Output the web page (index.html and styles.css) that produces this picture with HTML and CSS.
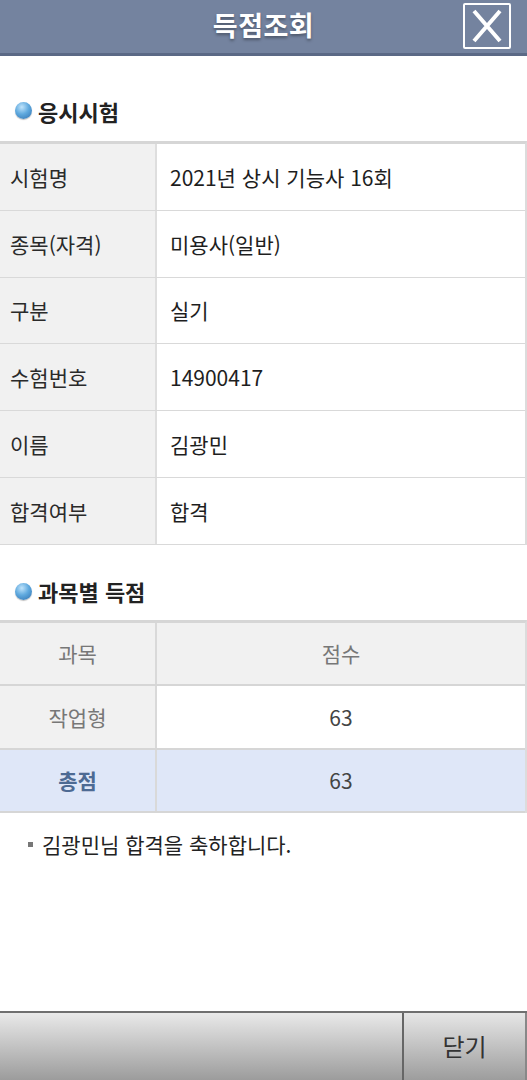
FILE: index.html
```html
<!DOCTYPE html>
<html lang="ko">
<head>
<meta charset="utf-8">
<title>득점조회</title>
<link rel="stylesheet" href="styles.css">
</head>
<body>
<div class="page">
  <header class="topbar">
    <h1 class="title">득점조회</h1>
    <button class="close-x" aria-label="닫기">
      <svg width="44" height="42" viewBox="0 0 44 42"><path d="M9 6 L35 36 M35 6 L9 36" stroke="#fff" stroke-width="4" fill="none"/></svg>
    </button>
  </header>

  <h2 class="section-title"><span class="dot"></span>응시시험</h2>
  <div class="info-table">
    <div class="row"><div class="label">시험명</div><div class="value">2021년 상시 기능사 16회</div></div>
    <div class="row"><div class="label">종목(자격)</div><div class="value">미용사(일반)</div></div>
    <div class="row"><div class="label">구분</div><div class="value">실기</div></div>
    <div class="row"><div class="label">수험번호</div><div class="value">14900417</div></div>
    <div class="row"><div class="label">이름</div><div class="value">김광민</div></div>
    <div class="row"><div class="label">합격여부</div><div class="value">합격</div></div>
  </div>

  <h2 class="section-title second"><span class="dot"></span>과목별 득점</h2>
  <div class="score-table">
    <div class="srow head"><div class="scell subj">과목</div><div class="scell pts">점수</div></div>
    <div class="srow body"><div class="scell subj">작업형</div><div class="scell pts">63</div></div>
    <div class="srow total"><div class="scell subj">총점</div><div class="scell pts">63</div></div>
  </div>

  <p class="note"><span class="sq"></span>김광민님 합격을 축하합니다.</p>

  <footer class="bottombar">
    <div class="spacer"></div>
    <button class="close-btn">닫기</button>
  </footer>
</div>
</body>
</html>
```

FILE: styles.css
```css
* { box-sizing: border-box; }
html, body { margin: 0; padding: 0; background: #fff; }
body {
  font-family: "Noto Sans CJK KR", "Noto Sans", sans-serif;
  color: #222;
}
.page {
  width: 527px;
  min-height: 1080px;
  display: flex;
  flex-direction: column;
}
.topbar {
  height: 56px;
  flex: none;
  background: #74839f;
  border-bottom: 3px solid #5b6985;
  display: flex;
  align-items: center;
  justify-content: center;
  position: relative;
}
.title {
  margin: 0;
  color: #fff;
  font-size: 27px;
  font-weight: 700;
  letter-spacing: 0.5px;
  text-shadow: 0 2px 3px rgba(0,0,0,0.35);
  line-height: 1;
  padding-bottom: 4px;
}
.close-x {
  position: absolute;
  right: 16px;
  top: 3px;
  width: 48px;
  height: 46px;
  border: 2px solid #fff;
  border-radius: 2px;
  background: transparent;
  padding: 0;
  display: flex;
  align-items: center;
  justify-content: center;
}
.section-title {
  margin: 0;
  height: 85px;
  flex: none;
  display: flex;
  align-items: center;
  padding: 24px 0 0 15px;
  font-size: 22px;
  font-weight: 700;
  color: #222;
}
.section-title.second {
  height: 75px;
  padding-top: 18px;
}
.dot {
  width: 17px;
  height: 17px;
  border-radius: 50%;
  margin-right: 6px;
  background: radial-gradient(circle at 40% 30%, #bfe3fb 0%, #5fa9de 45%, #2f6fae 100%);
  box-shadow: 0 1px 1px rgba(0,0,0,0.25);
}
.info-table {
  border-top: 3px solid #d6d6d6;
  border-right: 2px solid #dcdcdc;
  width: 527px;
  flex: none;
}
.row {
  display: flex;
  height: 66.8px;
  border-bottom: 1.5px solid #d9d9d9;
}
.label {
  width: 157px;
  background: #f1f1f1;
  border-right: 2px solid #dedede;
  display: flex;
  align-items: center;
  padding-left: 10px;
  font-size: 21px;
  color: #2a2a2a;
}
.value {
  flex: 1;
  display: flex;
  align-items: center;
  padding-left: 13px;
  font-size: 21px;
  color: #1e1e1e;
}
.score-table {
  border-top: 3px solid #d6d6d6;
  border-right: 2px solid #dcdcdc;
  flex: none;
}
.srow {
  display: flex;
  border-bottom: 2px solid #d6d6d6;
}
.srow.head { height: 63px; background: #f1f1f1; }
.srow.body { height: 64px; }
.srow.total { height: 63px; background: #dfe7f8; }
.scell {
  display: flex;
  align-items: center;
  justify-content: center;
  font-size: 21px;
}
.subj {
  width: 157px;
  border-right: 2px solid #d9d9d9;
  color: #777;
}
.pts { flex: 1; color: #444; }
.srow.head .pts { color: #777; }
.srow.body .subj { background: #f1f1f1; }
.srow.total .subj { color: #4d6a93; font-weight: 700; }
.srow.total .subj, .srow.total .pts { background: #dfe7f8; }
.note {
  margin: 16px 0 0 28px;
  font-size: 21px;
  color: #222;
  display: flex;
  align-items: center;
}
.sq {
  width: 5px;
  height: 5px;
  background: #777;
  margin-right: 9px;
  margin-top: 2px;
}
.bottombar {
  margin-top: auto;
  height: 69px;
  flex: none;
  border-top: 2px solid #6f6f6f;
  display: flex;
  background: linear-gradient(#e9e9e9, #9c9c9c);
}
.spacer {
  width: 404px;
  border-right: 2px solid #666;
}
.close-btn {
  flex: 1;
  border: none;
  border-right: 2px solid #888;
  background: linear-gradient(#e6e6e6, #9d9d9d);
  font-family: inherit;
  font-size: 24px;
  color: #333;
  padding: 0 0 2px 0;
}
```
